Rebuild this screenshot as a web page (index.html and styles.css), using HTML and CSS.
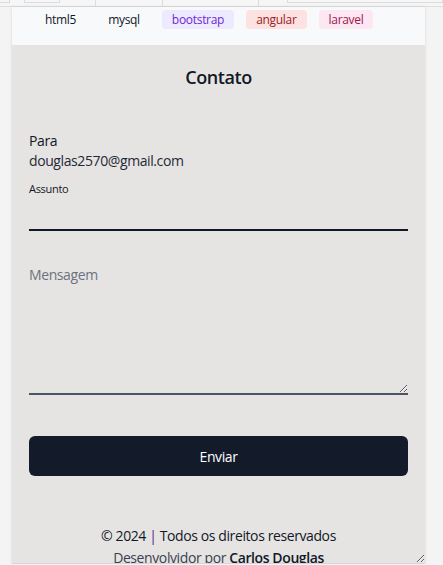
FILE: index.html
```html
<!DOCTYPE html>
<html lang="pt">
<head>
<meta charset="utf-8">
<title>Contato</title>
<link rel="stylesheet" href="styles.css">
</head>
<body>
<div class="topbar">
  <span class="tb tb-a"></span>
  <span class="tb tb-b"></span>
  <span class="tb tb-c"></span>
  <span class="tb tb-d"></span>
  <span class="tb tb-e"></span>
  <span class="tb tb-f"></span>
</div>
<div class="card">
  <div class="tags">
    <span class="tag">html5</span>
    <span class="tag">mysql</span>
    <span class="tag tag-violet">bootstrap</span>
    <span class="tag tag-red">angular</span>
    <span class="tag tag-pink">laravel</span>
  </div>
  <h2 class="title">Contato</h2>
  <form class="form">
    <div class="to">
      <div>Para</div>
      <div class="email">douglas2570@gmail.com</div>
    </div>
    <label class="label">Assunto</label>
    <input class="input" type="text">
    <textarea class="textarea" placeholder="Mensagem"></textarea>
    <button class="btn" type="button">Enviar</button>
  </form>
  <footer class="footer">
    <p class="copy">© 2024 <span class="sep">|</span> Todos os direitos reservados</p>
    <p class="dev">Desenvolvidor por <span class="name">Carlos Douglas</span></p>
  </footer>
</div>
</body>
</html>
```
FILE: styles.css
```css
* { box-sizing: border-box; }
body {
  margin: 0;
  background: #f4f4f4;
  font-family: "Open Sans", "Noto Sans", sans-serif;
  color: #111827;
  overflow: hidden;
  letter-spacing: -0.4px;
}
.topbar {
  height: 7px;
  border-bottom: 1px solid #dedede;
  display: flex;
  align-items: flex-start;
  background: #f6f6f6;
}
.tb { display: block; height: 3px; border: 1px solid #dcdcdc; border-top: none; }
.tb-a { width: 10px; border-left: none; }
.tb-b { width: 36px; margin-left: 14px; }
.tb-c { width: 0; margin-left: 35px; height: 6px; border-width: 0 0 0 1px; }
.tb-d { width: 0; margin-left: 66px; height: 6px; border-width: 0 0 0 1px; }
.tb-e { width: 0; margin-left: 95px; height: 6px; border-width: 0 0 0 1px; }
.tb-f { flex: 1; margin-left: 28px; }
.card {
  width: 413px;
  height: 557px;
  margin-left: 12px;
  background: #e6e4e2;
  box-shadow: 0 0 3px rgba(0,0,0,0.12);
  overflow: hidden;
  resize: both;
  border-bottom: 1px solid #d6d6d6;
}
.tags {
  height: 38px;
  background: #f8f9fb;
  display: flex;
  gap: 12px;
  padding: 3px 0 0 23px;
  align-items: flex-start;
}
.tag {
  font-size: 12px;
  line-height: 19px;
  padding: 0 10px;
  border-radius: 4px;
  color: #111827;
  letter-spacing: -0.3px;
  font-weight: 500;
}
.tag-violet { background: #ede9fe; color: #6d28d9; }
.tag-red { background: #fee2e2; color: #991b1b; }
.tag-pink { background: #fce7f3; color: #9d174d; }
.title {
  margin: 18px 0 0;
  text-align: center;
  font-size: 18px;
  line-height: 28px;
  font-weight: 600;
}
.form {
  padding: 40px 17px 0;
  display: flex;
  flex-direction: column;
}
.to { font-size: 14px; line-height: 20px; }
.email { color: #1f2937; }
.label {
  margin-top: 10px;
  font-size: 11px;
  line-height: 16px;
  font-weight: 500;
  letter-spacing: -0.3px;
}
.input {
  height: 34px;
  border: none;
  border-bottom: 2px solid #111827;
  background: transparent;
  font: inherit;
  font-size: 14px;
  outline: none;
}
.textarea {
  margin-top: 26px;
  height: 138px;
  border: none;
  border-bottom: 2px solid #4b5563;
  background: transparent;
  font: inherit;
  font-size: 14px;
  line-height: 20px;
  padding: 8px 0;
  outline: none;
  letter-spacing: -0.4px;
}
.textarea::placeholder { color: #6b7280; }
.btn {
  margin-top: 41px;
  height: 40px;
  border: none;
  border-radius: 6px;
  background: #131a2a;
  color: #fff;
  font: inherit;
  font-size: 14px;
  letter-spacing: -0.4px;
}
.footer {
  margin-top: 49px;
  text-align: center;
  font-size: 14px;
}
.footer p { margin: 0; line-height: 22px; }
.sep { color: #581c87; }
.dev { color: #374151; }
.name { color: #111827; font-weight: 600; }
```
